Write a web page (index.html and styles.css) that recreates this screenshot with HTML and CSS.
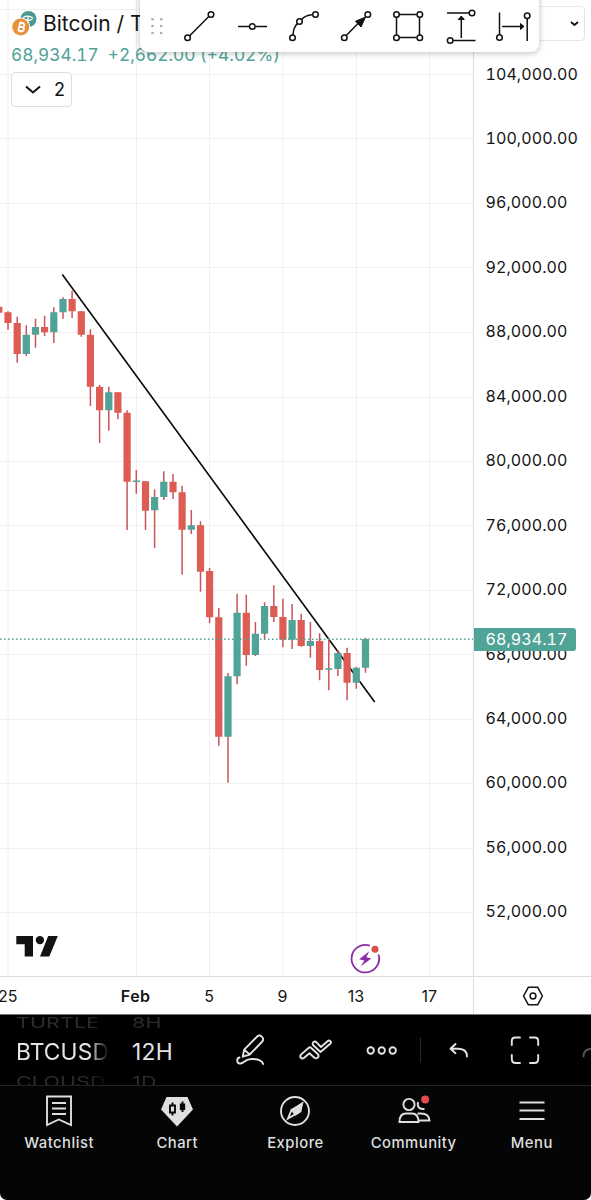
FILE: index.html
```html
<!DOCTYPE html>
<html lang="en">
<head>
<meta charset="utf-8">
<title>BTCUSD 12H</title>
<link rel="stylesheet" href="styles.css">
</head>
<body>
<div class="app">
  <main class="workspace">
    <section class="pane">
      <svg class="plot" viewBox="0 0 473 976">
        <path class="grid" d="M0 9.5H473M0 74.5H473M0 138.5H473M0 203.5H473M0 267.5H473M0 332.5H473M0 397.5H473M0 461.5H473M0 525.5H473M0 590.5H473M0 654.5H473M0 719.5H473M0 783.5H473M0 848.5H473M0 912.5H473M8 0V976M136.5 0V976M209.5 0V976M283 0V976M356.5 0V976M429.5 0V976"/>
        <path class="trend" d="M62.3 274.5L374.7 702"/>
        <path class="wick" d="M8 311.3V329.7M17.2 316.7V362.7M26.3 325.3V356M35.5 318.7V347.7M44.6 315.7V336M53.8 307.3V343M63 297.3V318.7M72.1 290.7V318M81.3 311V336.7M90.4 329.3V406M99.6 385V443M108.8 386.7V430.7M117.9 392.3V419.3M127.1 410.3V530M136.3 470V493.7M145.5 481V530M154.6 489.3V548M163.8 471.3V500M173 474V499M182.1 485.7V574.7M191.3 510V534M200.5 521.3V591.7M209.6 568V623.3M218.8 608V745.7M228 673V782.7M237.1 593.7V684.3M246.3 594.7V665.7M255.4 622V656M264.6 602.3V639.7M273.8 585.3V622M282.9 598.7V647.3M292.1 604V649M301.2 613.7V646.7M310.4 622V657.7M319.6 633.3V680.3M328.8 639.3V690.3M337.9 650V676M347.1 647.7V700.3M356.3 666.7V688.7M365.5 637.7V672.7"/>
        <path class="down" d="M-1.2 306.7V312.7M8 312.3V323M17.2 323V354M44.6 327V332.3M72.1 299V311.3M81.3 311.3V334.7M90.4 334.7V386.7M99.6 386.7V410.3M117.9 392.3V412.7M127.1 412.7V481.7M145.5 481.3V510.7M173 481.7V492.3M182.1 492.3V529.7M200.5 525.3V571.7M209.6 571V617.3M218.8 617.3V736.7M246.3 612.7V655M273.8 606V617M282.9 617V639.7M301.2 620V646M319.6 641V670M347.1 653V682.7"/>
        <path class="up" d="M26.3 334.7V354M35.5 327V334.7M53.8 312.3V332.3M63 299V312.3M108.8 392.3V410.3M136.3 480.6V482M154.6 497V510.3M163.8 481.7V497M191.3 525.3V529.7M228 676.3V736.7M237.1 612.7V676.3M255.4 633.7V655M264.6 606V633.7M292.1 620V639.7M310.4 641V646M328.8 668.3V669.7M337.9 653V669M356.3 667.7V682.7M365.5 639V667.7"/>
        <path class="last" d="M0 639.3H473"/>
        <g class="brand"><path d="M16.300 936H33V956.600H24.700V944.200H16.300Z"/><circle cx="39.900" cy="940.100" r="4.200"/><path d="M48.200 936H57.800L49.300 956.600H40Z"/></g>
        <path class="bolt-ring" d="M369.800 945.600A13.800 13.800 0 1 0 378.500 954.500"/>
        <path class="bolt" d="M369.300 951.200L359.200 959.200 364.300 960.400 360.800 966.300 371.400 958.500 366.300 957.200Z"/>
        <circle cx="375" cy="949.200" r="3.500" fill="#d9504a"/>
      </svg>
      <header class="legend">
        <div class="symbol">
          <svg class="coins" width="26" height="27" viewBox="0 0 26 27"><circle cx="17.500" cy="9" r="8" fill="#4c9890"/><path d="M12 7.500Q17 4.500 22 8M13 9Q17 12 21.500 9M17 7V14" stroke="#fff" stroke-width="1.300" fill="none"/><circle cx="9.700" cy="17" r="9.500" fill="#fff"/><circle cx="9.700" cy="17" r="8.500" fill="#e6923b"/><g transform="translate(.7 0) rotate(13 9 17)" fill="none" stroke="#fff" stroke-width="1.700"><path d="M7 13H10.300A1.900 1.900 0 0 1 10.300 16.800H7H10.700A2 2 0 0 1 10.700 20.800H7M7.500 12.500V21.300"/><path d="M8.200 11.500V13M10.200 11.500V13M8.200 21V22.400M10.200 21V22.400" stroke-width="1.100"/></g></svg>
          <span>Bitcoin / T</span>
        </div>
        <div class="quote"><span>68,934.17</span><span class="change">+2,662.00 (+4.02%)</span></div>
        <button class="studies"><svg width="18" height="10" viewBox="0 0 18 10"><path d="M2 1.500L9 7.500 16 1.500" fill="none" stroke="#111" stroke-width="2"/></svg><span>2</span></button>
      </header>
    </section>
    <aside class="prices">
      <div class="currency"><svg width="9" height="6" viewBox="0 0 9 6"><path d="M1 1L4.500 4 8 1" fill="none" stroke="#111" stroke-width="1.800"/></svg></div>
      <span>104,000.00</span><span>100,000.00</span><span>96,000.00</span><span>92,000.00</span><span>88,000.00</span><span>84,000.00</span><span>80,000.00</span><span>76,000.00</span><span>72,000.00</span><span>68,000.00</span><span>64,000.00</span><span>60,000.00</span><span>56,000.00</span><span>52,000.00</span>
      <div class="last-price">68,934.17</div>
    </aside>
    <div class="times"><span class="t25">25</span><b>Feb</b><span>5</span><span>9</span><span>13</span><span>17</span></div>
    <div class="axis-settings"><svg width="22" height="20" viewBox="0 0 22 20" fill="none" stroke="#151515" stroke-width="1.500"><path d="M6.300 1.300H15.700L20.400 10 15.700 18.700H6.300L1.600 10Z"/><circle cx="11" cy="10" r="2.900"/></svg></div>
  </main>
  <div class="drawbar">
    <svg width="399" height="52" viewBox="0 0 399 52" fill="none" stroke="#111" stroke-width="1.500">
      <g fill="#aaa" stroke="none"><circle cx="12.500" cy="19.300" r="1.300"/><circle cx="21.200" cy="19.300" r="1.300"/><circle cx="12.500" cy="26" r="1.300"/><circle cx="21.200" cy="26" r="1.300"/><circle cx="12.500" cy="33" r="1.300"/><circle cx="21.200" cy="33" r="1.300"/></g>
      <path d="M49.700 35.800L68.800 16.500M98 26.500H109.300M115.300 26.500H127M153 35Q153.500 27 157.400 23.600M161.500 19.500Q165.500 15.300 172 14.800M206 35.800L220 21.500M258.800 14.500H276.500M258.800 37.500H276.500M256.500 17V35M279.500 17V35M307 13H329M313 40.500H335.500M321.300 38V18M359.500 12.500V34.500M387.200 19V41M362 26.500H383"/>
      <g><circle cx="47.600" cy="37.800" r="2.800"/><circle cx="71" cy="14.500" r="2.800"/><circle cx="112.300" cy="26.500" r="2.800"/><circle cx="152.500" cy="37.800" r="2.800"/><circle cx="159.500" cy="21.500" r="2.800"/><circle cx="175.500" cy="14.500" r="2.800"/><circle cx="204.300" cy="37.800" r="2.800"/><circle cx="227.800" cy="14.500" r="2.800"/><circle cx="256.500" cy="14.500" r="2.800"/><circle cx="279.800" cy="14.500" r="2.800"/><circle cx="256.500" cy="37.800" r="2.800"/><circle cx="279.800" cy="37.800" r="2.800"/><circle cx="332" cy="13" r="2.800"/><circle cx="310.200" cy="40.500" r="2.800"/><circle cx="359.500" cy="37.500" r="2.800"/><circle cx="387.200" cy="15.800" r="2.800"/></g>
      <path d="M225.500 17L215.500 21.300 221 27ZM321.300 16L318.300 19.500H324.300ZM384 26.500L380.500 23.500V29.500Z" fill="#111" stroke-width="1"/>
    </svg>
  </div>
  <section class="toolbar">
    <div class="wheel wheel-symbol"><span>TURTLE</span><strong>BTCUSD</strong><span>CLOUSD</span></div>
    <div class="wheel wheel-interval"><span>8H</span><strong>12H</strong><span>1D</span></div>
    <svg class="tools" width="371" height="71" viewBox="220 1015 371 71" fill="none" stroke="#e4e4e4" stroke-width="1.900" stroke-linecap="round" stroke-linejoin="round">
      <path d="M242.700 1056.700L244.200 1049.600 257.200 1036.500Q259.400 1034.500 261.800 1036.600Q264.300 1039 262.300 1041.500L249.700 1054.500ZM244.200 1049.600L249.700 1054.500M239.500 1057.500C236 1058.500 236.800 1064 240.500 1063.500C244.500 1063 244.500 1059 252 1059C259 1059 262 1061 263.200 1064"/>
      <path d="M301.200 1054.400L308.800 1047.800Q310 1046.800 311.200 1048L318 1054.200Q319.300 1056 317.800 1057.600Q316.200 1059 314.400 1057.700L309.500 1053.200 303.900 1058Q302 1059.200 300.800 1057.700Q299.500 1056 301.200 1054.400ZM313 1045L320.500 1052 330.500 1043.500Q331.500 1042 330.200 1041Q329 1040 327.500 1041.300L321 1047 316.500 1042.300Q315 1040.800 313.300 1042.200Q312 1043.500 313 1045Z"/>
      <circle cx="370.700" cy="1050.500" r="3.200"/><circle cx="381.700" cy="1050.500" r="3.200"/><circle cx="392.700" cy="1050.500" r="3.200"/>
      <path d="M420.500 1038V1062" stroke="#292929" stroke-width="1"/>
      <path d="M455.500 1044L450.500 1048.700 455.500 1053.200M451 1048.700H458.500Q467 1049 467 1056.500"/>
      <path d="M511.800 1045V1041Q511.800 1037.500 515.500 1037.500H520M530 1037.500H534.500Q538.200 1037.500 538.200 1041V1045M538.200 1055V1059Q538.200 1063 534.500 1063H530M520 1063H515.500Q511.800 1063 511.800 1059V1055"/>
      <path d="M583.500 1056.500Q583.500 1049.500 591 1048.800" stroke="#555"/>
    </svg>
  </section>
  <nav class="tabs">
    <a><svg width="34" height="32" viewBox="0 0 34 32"><path d="M5 1.500H29V30L16.800 24.500 5 30ZM10 8H24M10 13.500H24M10 19H24"/></svg><span>Watchlist</span></a>
    <a><svg width="34" height="32" viewBox="0 0 34 32"><path d="M6.500 2H27.500L33 14.500 17 31.500 1 14.500Z" fill="#dfdfdf" stroke="none"/><path d="M10 10.500H15V17.500H10ZM12.500 7.500V10.500M12.500 17.500V20.500M22.500 6.500V17M20.800 9.500H24.200V14H20.800Z" stroke="#080808"/></svg><span>Chart</span></a>
    <a><svg width="34" height="32" viewBox="0 0 34 32"><circle cx="17" cy="16" r="14"/><path d="M24 9L21 17 10 23.500 13.500 15Z"/><path d="M24 8.500L22.500 16.500 17.500 19.500 14 15.500Z" fill="#dfdfdf"/></svg><span>Explore</span></a>
    <a><svg width="34" height="32" viewBox="0 0 34 32"><circle cx="12" cy="9.500" r="5.600"/><path d="M2.500 27Q2.500 18.500 9 18.500H15Q21.500 18.500 21.500 27ZM21 7Q19.500 14.500 27.500 14M20.500 18.500H24Q32 18.500 32.500 25.500H22"/><circle cx="28.200" cy="4.500" r="4" fill="#e34b50" stroke="none"/></svg><span>Community</span></a>
    <a><svg width="34" height="32" viewBox="0 0 34 32"><path d="M4.500 7.500H29.500M4.500 15.500H29.500M4.500 24H29.500"/></svg><span>Menu</span></a>
  </nav>
</div>
</body>
</html>
```
FILE: styles.css
```css
* { box-sizing: border-box; }
body { margin: 0; background: #fff; font-family: Inter, sans-serif; color: #151515; }
.app { position: relative; width: 591px; height: 1200px; overflow: hidden; }
.workspace { display: grid; grid-template-columns: 473px 118px; grid-template-rows: 976px 38px; height: 1014px; }
.pane { position: relative; }
.plot { display: block; width: 473px; height: 976px; }
.plot > path { fill: none; }
.brand { fill: #131313; }
.plot > .bolt { fill: #8a2da5; }
.plot .grid { stroke: #f0f0f0; stroke-width: 1; }
.trend { stroke: #080808; stroke-width: 1.6; }
.wick { stroke: #c9555a; stroke-width: 1.5; }
.down { stroke: #dd5d55; stroke-width: 7.2; }
.up { stroke: #50a397; stroke-width: 7.2; }
.last { stroke: #50a397; stroke-width: 1.4; stroke-dasharray: 1.5 2.5; }
.bolt-ring { stroke: #8a2da5; stroke-width: 1.8; }
.legend { position: absolute; left: 11px; top: 10px; }
.symbol { display: flex; align-items: center; gap: 6px; height: 27px; font-size: 21px; white-space: nowrap; }
.quote { display: flex; gap: 9px; height: 35px; align-items: center; font-size: 17.3px; letter-spacing: 0; font-variant-numeric: tabular-nums; color: #50a397; white-space: nowrap; }
.studies { display: flex; align-items: center; justify-content: space-between; width: 61px; height: 35px; padding: 0 6px 0 12px; border: 1px solid #dedede; border-radius: 4px; background: #fff; font: 18px Inter, sans-serif; color: #111; }
.prices { position: relative; display: flex; flex-direction: column; padding: 41.6px 0 0 11.5px; border-left: 1px solid #ddd; font-size: 16px; letter-spacing: .08px; font-variant-numeric: tabular-nums; }
.prices span { height: 64.45px; line-height: 64.45px; flex: none; }
.last-price { position: absolute; left: 0; top: 628px; width: 102px; height: 23px; padding-left: 11.5px; line-height: 22px; color: #fff; background: #50a397; border-radius: 0 3px 3px 0; }
.currency { position: absolute; right: 6px; top: 6px; width: 60px; height: 35px; border: 1px solid #e7e7e7; border-radius: 4px; display: flex; align-items: center; justify-content: flex-end; padding-right: 5px; }
.times { display: grid; grid-template-columns: 99px repeat(5, 73.4px); border-top: 1px solid #ddd; font-size: 16px; line-height: 38px; text-align: center; white-space: nowrap; }
.times b { font-weight: 600; letter-spacing: .5px; }
.t25 { text-align: left; margin-left: -2px; }
.axis-settings { display: flex; align-items: center; justify-content: center; border-top: 1px solid #ddd; border-left: 1px solid #ddd; }
.drawbar { position: absolute; left: 140px; top: -10px; width: 399px; height: 62px; padding-top: 10px; border-radius: 0 0 8px 8px; background: #fff; box-shadow: 0 1px 6px #0004; }
.toolbar { display: flex; height: 72px; background: #000; border-top: 1px solid #777; border-bottom: 1px solid #222; overflow: hidden; }
.wheel { display: flex; flex-direction: column; height: 71px; font-size: 22.8px; color: #e4e4e4; white-space: nowrap; }
.wheel span { height: 22px; line-height: 22px; font-size: 21.5px; transform: scaleY(.7); color: #2c2c2c; flex: none; }
.wheel span:first-child { margin-top: -4.5px; }
.wheel strong { height: 37px; line-height: 37px; font-weight: 400; flex: none; }
.wheel-symbol { margin-left: 16px; width: 93px; letter-spacing: .1px; mask-image: linear-gradient(90deg, #000 78%, transparent); }
.wheel-interval { margin-left: 23px; width: 88px; letter-spacing: .3px; }
.tools { flex: none; }
.tabs { display: grid; grid-template-columns: repeat(5, 118.2px); height: 114px; padding-top: 9px; background: #050505; border-radius: 0 0 7px 7px; }
.tabs a { display: flex; flex-direction: column; align-items: center; gap: 6px; color: #dfdfdf; font-size: 14.8px; font-weight: 500; line-height: 20px; letter-spacing: .5px; }
.tabs svg { fill: none; stroke: #dfdfdf; stroke-width: 1.9; }
```
